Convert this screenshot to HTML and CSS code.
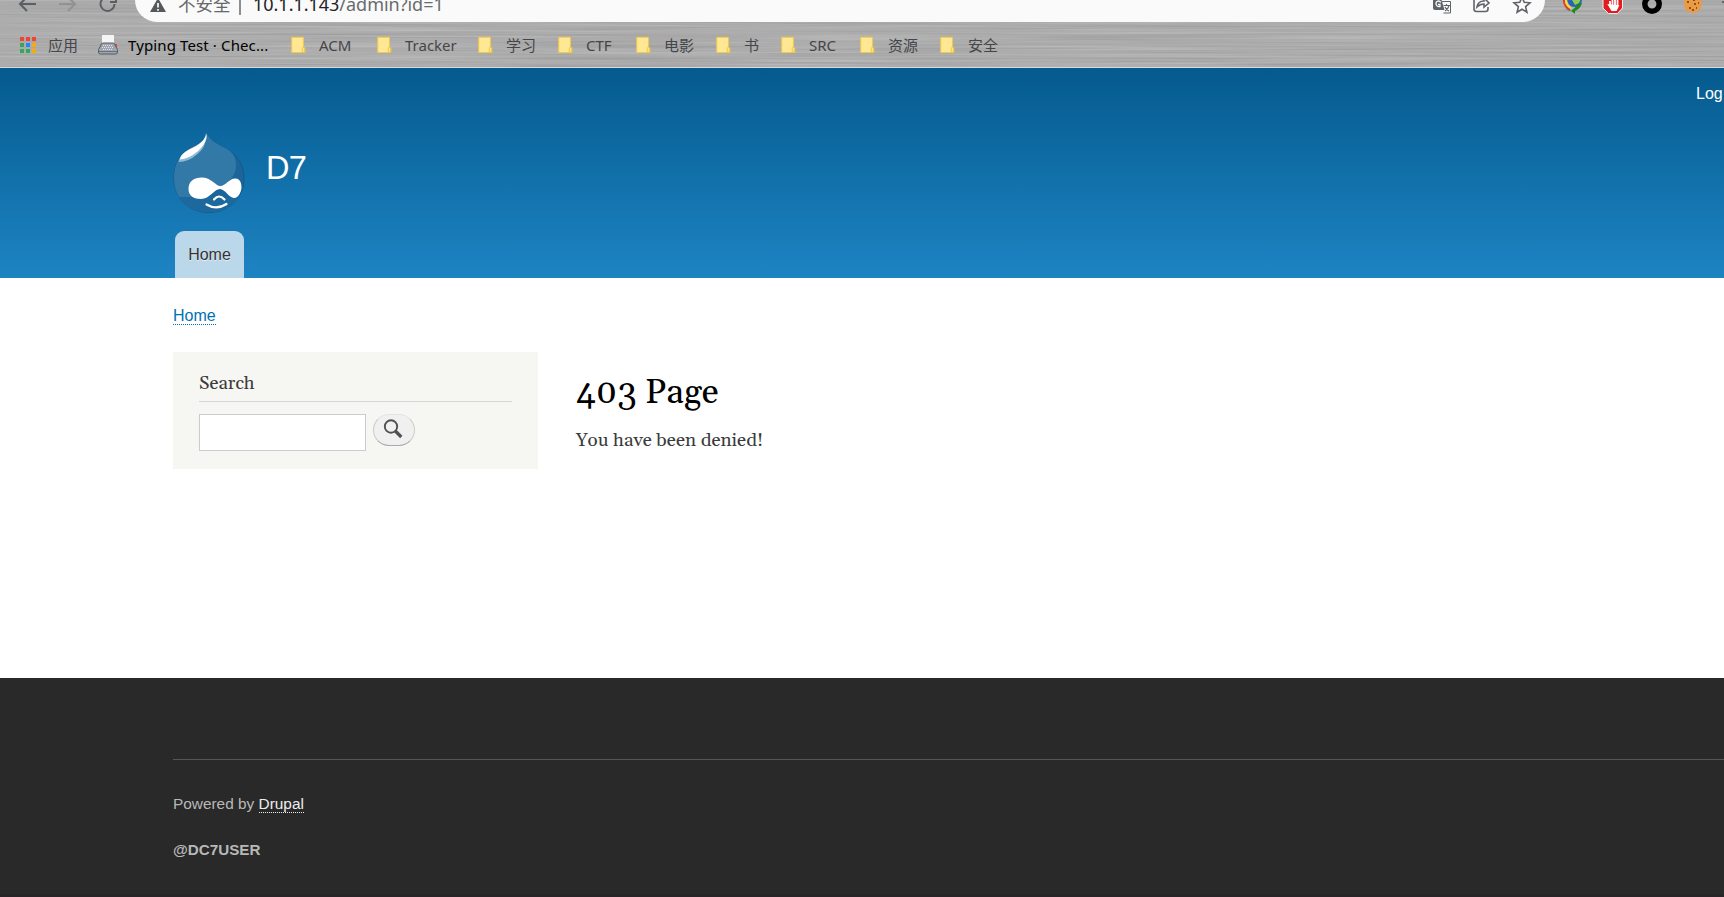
FILE: index.html
```html
<!DOCTYPE html>
<html lang="en">
<head>
<meta charset="utf-8">
<title>403 Page | D7</title>
<link rel="stylesheet" href="styles.css">
</head>
<body>
<svg class="defs" width="0" height="0" aria-hidden="true">
  <symbol id="folder" viewBox="0 0 17 18"><path d="M.8.8h12.4v11.4h1.5V17H.8z" fill="#ffe793" stroke="#f0cb45"/><path d="M12 16.8v-4.3q0-.9 1-.9h1.2v5.2z" fill="#ffe793" stroke="#f0c63a"/></symbol>
  <filter id="brushed" x="0" y="0" width="100%" height="100%" color-interpolation-filters="sRGB"><feTurbulence type="fractalNoise" baseFrequency="0.004 0.5" numOctaves="3" seed="4"/><feColorMatrix values=".15 0 0 0 .6  .15 0 0 0 .6  .15 0 0 0 .6  0 0 0 0 1"/></filter>
</svg>
<div class="browser">
  <svg class="metal" width="1724" height="67" aria-hidden="true"><rect width="1724" height="67" filter="url(#brushed)"/></svg>
  <div class="toolbar">
    <svg class="nav" width="135" height="22" viewBox="0 0 135 22" fill="none" stroke-width="2"><g stroke="#5b5e62"><path d="M36 4H21M28-4l-8 8 7 7"/><path d="M114.500 4a7 7 0 1 1-2-5M116-4v6h-6"/></g><path d="M59 4h15M67-4l8 8-7 7" stroke="#909294"/></svg>
    <div class="omnibox">
      <svg class="warn" width="16" height="14" viewBox="0 0 16 14"><path d="M8 0l8 14H0z" fill="#55585c"/><path d="M8 5v4.500M8 11v1.800" stroke="#fafafa" stroke-width="1.700"/></svg>
      <span class="insecure">不安全</span><i class="sep"></i>
      <span class="url"><b>10.1.1.143</b>/admin?id=1</span>
      <svg class="actions" width="110" height="22" viewBox="0 0 110 22" fill="none" stroke="#5f6368" stroke-width="1.600"><path d="M9 1.500h8.500v11.500h-7" stroke-width="1"/><path d="M0-2h8l3.500 12H2q-2 0-2-2z" fill="#5f6368" stroke="none"/><path d="M8 2.200Q4-.5 3 3q0 4 4 3.500V4.500H5" stroke="#fafafa" stroke-width="1.300"/><path d="M10.500 5.500H17M13.500 4v1.500M16 5.500q-1 4-4 5.500M12 7q1 2.500 4 4" stroke-width="1.100"/><path d="M42-2h-1v11q0 2.500 2.500 2.500h9q2.500 0 2.500-2.500V7M44 7q1-6 7-6v-3l5 5-5 4V4q-4 0-7 3z"/><path d="M89-3l2.200 5.300 5.800.5-4.400 3.800 1.300 5.600-4.900-3-4.900 3 1.300-5.600-4.400-3.800 5.800-.5z"/></svg>
    </div>
    <svg class="extensions" width="179" height="22" viewBox="0 0 179 22"><g fill="none" stroke-width="2"><path d="M19-2q-1 8 6 12" stroke="#e23b2a"/><path d="M21-2q-1 7 5 10" stroke="#f5e02c"/><path d="M23-2q0 5 4 8" stroke="#2a62d8"/></g><circle cx="30" cy="0" r="7" fill="#2b62b8"/><path d="M27 0l5-2 4 1-2 4-4 2z" fill="#8cd04a"/><path d="M19 9l7 2 8-7 3-1q-1 5-7 8v3l-5-4z" fill="#1c8a1c"/><path d="M63.500-6h9l5 5v9l-5 5.500h-9L58 8v-9z" fill="#e31c20" stroke="#eee"/><path d="M65 1v5M67.500-2v8M70-2v8M72.500 0v6M64 5l3 5h4l2-4z" fill="#fff" stroke="#fff" stroke-width="1.800"/><circle cx="107" cy="4" r="7.200" fill="none" stroke="#000" stroke-width="5.500"/><circle cx="147.800" cy="4" r="9" fill="#e99b45"/><path d="M142 2h2M149 4h2M144 8h2M151 8h1M148 0h2M153 3h1M147 10h2" stroke="#71370e" stroke-width="1.700"/><path d="M177 2h2" stroke="#666" stroke-width="2"/></svg>
  </div>
  <nav class="bookmarks">
    <a class="mark"><svg width="16" height="16"><path d="M0 0h4v4H0zM6 0h4v4H6zM12 0h4v4h-4z" fill="#f44336"/><path d="M0 6h4v4H0zM0 12h4v4H0zM6 12h4v4H6z" fill="#34a853"/><path d="M6 6h4v4H6z" fill="#2684fc"/><path d="M12 6h4v4h-4zM12 12h4v4h-4z" fill="#fbab00"/></svg><span>应用</span></a>
    <a class="mark typing"><svg width="20" height="20" viewBox="0 0 20 20"><path d="M4 0h12v10H4z" fill="#f5f5f5"/><path d="M16 9h3v3h-3z" fill="#e74b34"/><path d="M5 8h10q2 0 2.500 3l2 3.500V17q0 2-2 2h-15q-2 0-2-2v-2.500l2-3.500Q3 8 5 8z" fill="#a0a5b0" stroke="#555c6b"/><path d="M5 10.500h10M4 12.500h12M5 14.500h10" stroke="#e1e3e7" stroke-dasharray="1 1"/><path d="M1 16.500h18" stroke="#6a7080"/></svg><span>Typing Test · Chec...</span></a>
    <a class="mark"><svg><use href="#folder"/></svg><span>ACM</span></a>
    <a class="mark"><svg><use href="#folder"/></svg><span>Tracker</span></a>
    <a class="mark"><svg><use href="#folder"/></svg><span>学习</span></a>
    <a class="mark"><svg><use href="#folder"/></svg><span>CTF</span></a>
    <a class="mark"><svg><use href="#folder"/></svg><span>电影</span></a>
    <a class="mark"><svg><use href="#folder"/></svg><span>书</span></a>
    <a class="mark"><svg><use href="#folder"/></svg><span>SRC</span></a>
    <a class="mark"><svg><use href="#folder"/></svg><span>资源</span></a>
    <a class="mark"><svg><use href="#folder"/></svg><span>安全</span></a>
  </nav>
</div>
<header class="header">
  <div class="account"><a>Log in</a></div>
  <div class="brand">
    <svg width="73" height="82" viewBox="0 0 73 82"><path d="M33.500 0C33.500 7 27 10 19 14 7 20 1 30 1 45c0 20 15 34.500 35 34.500S71 65 71 45C71 29 61 19 50 14 43 10 37 7 33.500 0z" fill="#1b659a" stroke="#12598b"/><path d="M33.500 0C33.500 7 27 10 19 14 7 20 1 30 1 45q0 11 5 19h14L44 57C57 50 63 42 63 32Q63 23 57 18 54 15.500 50 14C43 10 37 7 33.500 0z" fill="#3279a8"/><path d="M6 64h53l8-2C62 73 51 79.500 36 79.500 23 79.500 12 74 6 64z" fill="#1d689d"/><path d="M5.500 29q0-5 9-11 5-3 17-9 1 5-7 12-9 8-19 8z" fill="#8dbad7"/><path d="M7 26.500q0-5 9-10Q33 9 33 0q3 8-8.500 18.500-9 7.500-17.500 8z" fill="#fff"/><path d="M15.500 56c0-8 6-11.500 13-11.500 10 0 14 8.500 19 8.500s9-8 15-7.500c5 .5 6 5 6 9s-3 10.500-7.500 10.500c-5 0-9-9-14-9-6 0-10 10-19 10-7 0-12.500-3-12.500-10z" fill="#fff"/><path d="M41 66.500q5-6 10.500 0M33.500 71.500q10 6 20-.5" fill="none" stroke="#fff" stroke-width="2.200" stroke-linecap="round"/></svg>
    <span class="site-name">D7</span>
  </div>
  <a class="tab">Home</a>
</header>
<main class="main">
  <div class="crumb"><a>Home</a></div>
  <div class="columns">
    <aside class="sidebar">
      <h2>Search</h2>
      <div class="search"><input type="text" aria-label="Search"><button aria-label="Search"><svg width="20" height="20" viewBox="0 0 20 20" fill="none" stroke="#505050"><circle cx="8" cy="7.500" r="6.200" stroke-width="1.900"/><path d="M12.300 12l6 6" stroke-width="3.200"/></svg></button></div>
    </aside>
    <article class="content"><h1>403 Page</h1><p>You have been denied!</p></article>
  </div>
</main>
<footer class="footer"><div class="footer-inner"><p>Powered by <a>Drupal</a></p><p class="user">@DC7USER</p></div></footer>
</body>
</html>
```
FILE: styles.css
```css
* { box-sizing: border-box; }
body { margin: 0; width: 1724px; height: 897px; overflow: hidden; background: #fff; font-family: "Liberation Sans", Arial, sans-serif; color: #3b3b3b; }
h1, h2, p { margin: 0; font-weight: normal; }
.defs { display: block; }
.browser { position: relative; z-index: 0; height: 68px; border-bottom: 1px solid #d4dbe0; background: #acacac; font-family: "Noto Sans", "Noto Sans CJK SC", sans-serif; }
.metal { position: absolute; left: 0; top: 0; z-index: -1; }
.toolbar { display: flex; height: 22px; overflow: hidden; }
.toolbar svg { flex: none; }
.omnibox { display: flex; width: 1410px; height: 22px; flex: none; padding-left: 15px; background: #fafafa; border-radius: 0 0 22px 22px; overflow: hidden; }
.warn { margin-top: -2px; }
.insecure { width: 61px; margin: -10px 0 0 12px; font: 17.5px/28px "Noto Sans CJK SC", sans-serif; color: #65686c; white-space: nowrap; }
.sep { width: 2px; height: 15px; background: #8c8e91; }
.url { width: 240px; margin: -10px 0 0 12px; font-size: 18px; line-height: 28px; letter-spacing: -.02px; color: #686b6f; white-space: nowrap; }
.url b { font-weight: normal; color: #202124; }
.actions { margin-left: auto; margin-right: 2px; }
.bookmarks { display: grid; grid-template-columns: 78px 193px 86px 101px 80px 78px 80px 65px 79px 80px 60px; height: 45px; padding-left: 20px; align-items: center; }
.mark { display: flex; align-items: center; gap: 12px; font-size: 15px; line-height: 20px; color: #44464a; white-space: nowrap; }
.mark svg { width: 16px; height: 18px; flex: none; }
.mark:first-child svg { height: 16px; }
.mark.typing { gap: 10px; letter-spacing: .12px; color: #000; }
.mark.typing svg { width: 20px; height: 20px; }
.header { height: 210px; background: linear-gradient(#055a8e, #1d84c3); overflow: hidden; }
.account { height: 65px; padding: 16px 0 0 1696px; font-size: 16px; line-height: 20px; color: #fff; white-space: nowrap; }
.brand { display: flex; height: 98px; padding-left: 172.5px; }
.site-name { margin: 16px 0 0 20.5px; font-size: 32.5px; line-height: 38px; letter-spacing: -.6px; color: #fff; }
.tab { display: block; width: 69px; height: 47px; margin-left: 175px; border-radius: 9px 9px 0 0; background: #bbd8eb; text-align: center; font-size: 16px; line-height: 47px; color: #333; text-shadow: 0 1px #eee; }
.main { height: 400px; padding: 27px 0 0 173px; }
.crumb { height: 47px; padding-top: 2px; font-size: 16px; color: #0071b3; }
.crumb a { display: block; width: fit-content; height: 18px; line-height: 18px; border-bottom: 1px dotted #0071b3; }
.columns { display: flex; }
.sidebar { width: 365px; height: 117px; padding: 18px 26px; background: #f6f6f2; }
.sidebar h2 { height: 32px; border-bottom: 1px solid #d6d6d6; font: 18.6px/27px Gelasio, Georgia, "Liberation Serif", serif; }
.search { display: flex; gap: 7px; padding-top: 12px; }
.search input { width: 167px; height: 37px; border: 1px solid #ccc; background: #fff; }
.search button { width: 42px; height: 32px; padding: 0; border: 1px solid #ccc; border-top-color: #e4e4e4; border-bottom-color: #aaa; border-radius: 16px; background: #f0f0f0; }
.search button svg { display: block; margin: -2px 0 0 9px; }
.content { padding: 20px 0 0 38px; font-family: Gelasio, Georgia, "Liberation Serif", serif; }
.content h1 { font-size: 35px; line-height: 42px; color: #000; }
.content p { margin-top: 14px; font-size: 18.8px; line-height: 26px; }
.footer { height: 219px; padding: 81px 0 0 173px; background: #292929; border-bottom: 3px solid #292427; color: #b8b8b8; font-size: 15.4px; line-height: 20px; }
.footer-inner { border-top: 1px solid #555; padding-top: 34px; }
.footer a { color: #eee; display: inline-block; line-height: 17px; border-bottom: 1px dotted #eee; }
.footer .user { margin-top: 26px; font-size: 15.2px; font-weight: bold; }
```
